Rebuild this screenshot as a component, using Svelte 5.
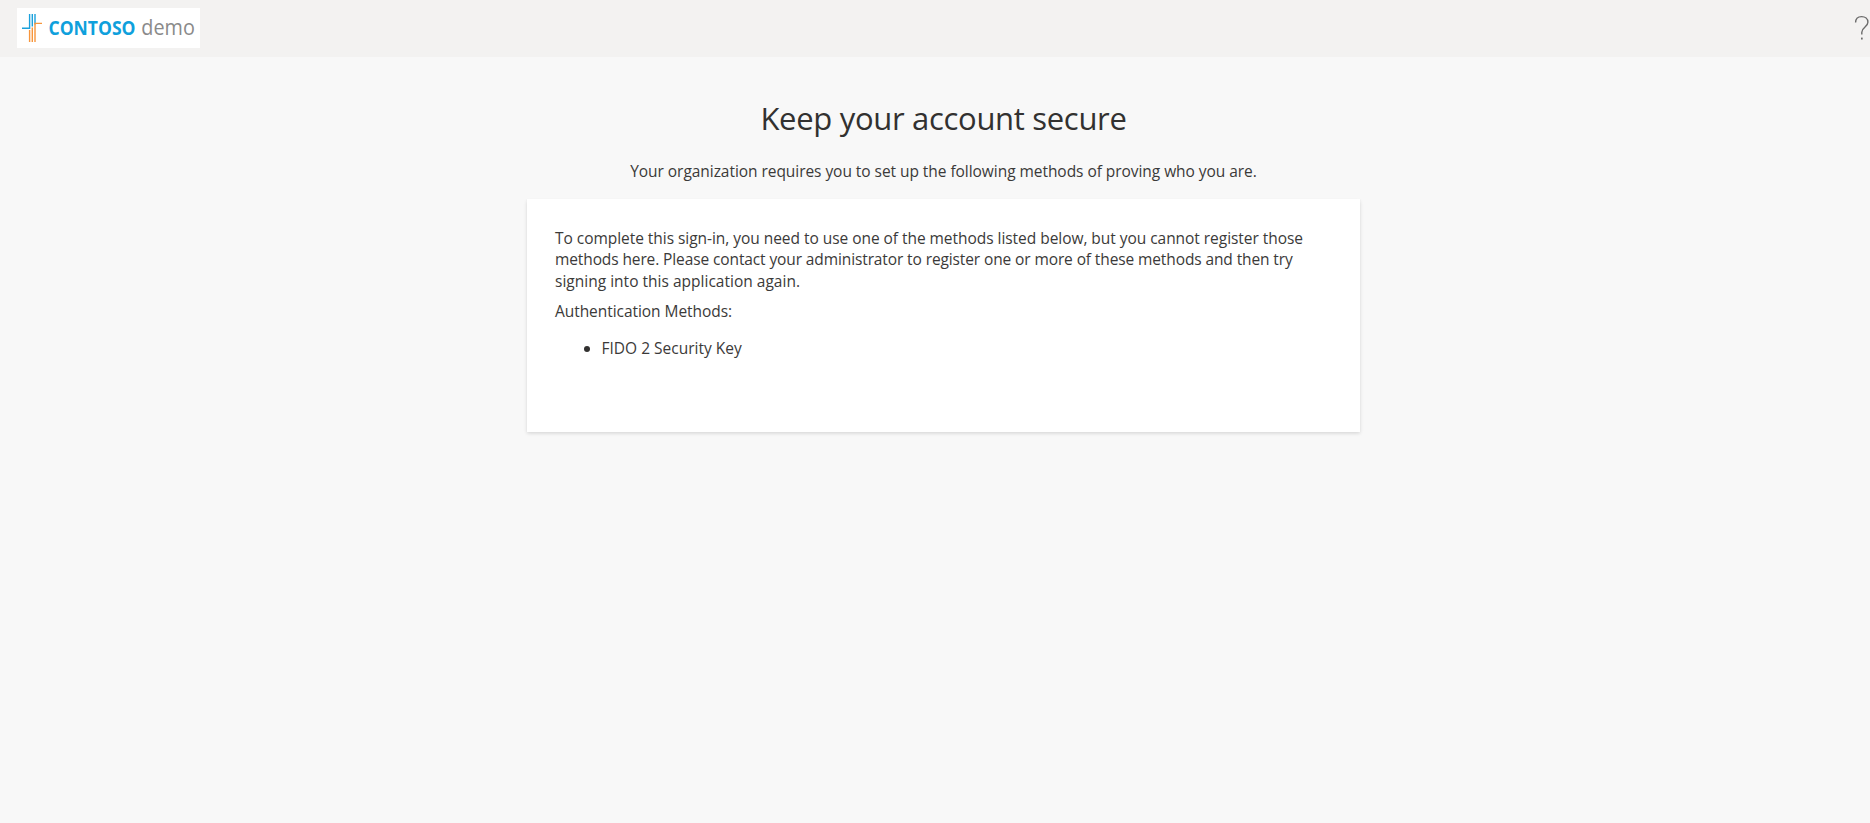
<script>
  const paragraph = [
    { text: 'To complete this sign-in, you need to use one of the methods listed below, but you cannot register those', spacing: -0.042 },
    { text: 'methods here. Please contact your administrator to register one or more of these methods and then try', spacing: -0.112 },
    { text: 'signing into this application again.', spacing: 0.011 }
  ];
  const methods = ['FIDO 2 Security Key'];
</script>

<div class="page">
  <header>
    <div class="logo">
      <svg width="183" height="40" viewBox="0 0 183 40" role="img" aria-label="Contoso demo">
        <g fill="none" stroke="#1ba1dc" stroke-width="1.4">
          <path d="M12.6 6V20.3H5" />
          <path d="M15.3 6V18.5M18 6V16.5" />
        </g>
        <g fill="none" stroke="#f7963c" stroke-width="1.4">
          <path d="M12.6 22V34M15.3 19.5V34" />
          <path d="M18 34V15.4H25" />
        </g>
        <text class="brand" x="31.5" y="27.4" textLength="87" lengthAdjust="spacingAndGlyphs">CONTOSO</text>
        <text class="suffix" x="124.3" y="27.4" textLength="53.5" lengthAdjust="spacingAndGlyphs">demo</text>
      </svg>
    </div>
    <button aria-label="Help">
      <svg width="16" height="26" viewBox="0 0 16 26">
        <path d="M1.6 7.6C1.6 3.8 4.1 1.6 7.6 1.6S13.9 3.8 13.9 7.2C13.9 12.2 7.8 12.4 7.8 17.2V19.4" fill="none" stroke="#6b6b6b" stroke-width="1.4" />
        <rect x="7" y="22.6" width="1.7" height="1.9" fill="#6b6b6b" />
      </svg>
    </button>
  </header>

  <main>
    <h1>Keep your account secure</h1>
    <p class="subtitle">Your organization requires you to set up the following methods of proving who you are.</p>
    <section>
      <p class="message">
        {#each paragraph as line}
          <span style="letter-spacing: {line.spacing}px">{line.text}</span>
        {/each}
      </p>
      <p class="label">Authentication Methods:</p>
      <ul>
        {#each methods as method}
          <li>{method}</li>
        {/each}
      </ul>
    </section>
  </main>
</div>

<style>
  :global(body) {
    background: #f8f8f8;
    overflow: hidden;
  }
  .page {
    min-height: 823px;
    box-sizing: border-box;
    font-family: "Open Sans", "Noto Sans", sans-serif;
    font-size: 15.5px;
    line-height: 21.3px;
    color: #3b3a39;
  }
  header {
    height: 57px;
    box-sizing: border-box;
    padding: 8px 0 0 17px;
    display: flex;
    justify-content: space-between;
    align-items: flex-start;
    background: #f3f2f1;
  }
  .logo {
    width: 183px;
    height: 40px;
    background: #fff;
  }
  .logo svg {
    display: block;
  }
  .brand {
    font-size: 19.5px;
    font-weight: 700;
    fill: #0fa0dc;
  }
  .suffix {
    font-size: 21px;
    fill: #8a8a8a;
  }
  button {
    margin: 7px 0 0;
    padding: 0;
    border: 0;
    background: none;
  }
  button svg {
    display: block;
  }
  main {
    width: 833px;
    margin-left: 527px;
    padding-top: 40px;
  }
  h1 {
    margin: 0;
    font-size: 31px;
    font-weight: 400;
    line-height: 42px;
    letter-spacing: -0.31px;
    text-align: center;
    color: #323130;
  }
  p {
    margin: 0;
  }
  .subtitle {
    margin-top: 21.7px;
    text-align: center;
    letter-spacing: -0.05px;
  }
  section {
    height: 233px;
    box-sizing: border-box;
    margin-top: 17px;
    padding: 29px 28px 0;
    background: #fff;
    box-shadow: 0 1.6px 3.6px rgba(0, 0, 0, 0.14), 0 0.3px 0.9px rgba(0, 0, 0, 0.12);
  }
  .message span {
    display: block;
    white-space: nowrap;
  }
  .label {
    margin-top: 9px;
    letter-spacing: -0.055px;
  }
  ul {
    margin: 16px 0 0;
    padding-left: 46.5px;
  }
  li::marker {
    color: #323130;
  }
</style>
